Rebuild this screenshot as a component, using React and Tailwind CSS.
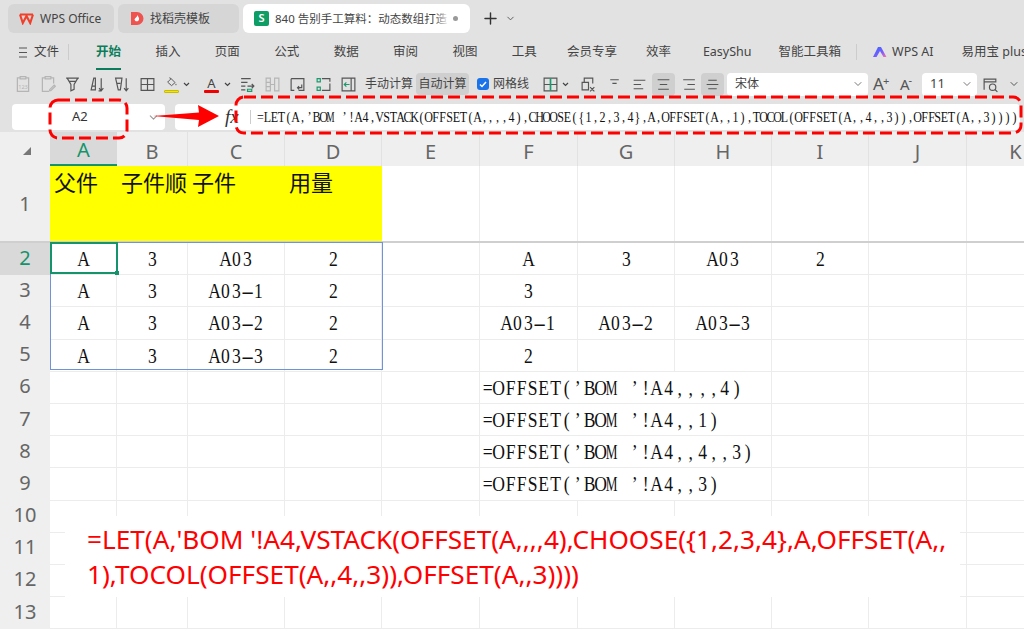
import React from 'react';
import { ChevronDown, Plus, X } from 'lucide-react';

const SANS = "font-[family-name:'Noto_Sans','Noto_Sans_CJK_SC',sans-serif]";
const SERIF = "font-[family-name:'Liberation_Serif','Noto_Sans_CJK_SC',serif]";

const FORMULA = "=LET(A,’BOM ’!A4,VSTACK(OFFSET(A,,,,4),CHOOSE({1,2,3,4},A,OFFSET(A,,1),TOCOL(OFFSET(A,,4,,3)),OFFSET(A,,3))))";

// SimSun's latin glyphs are narrow and fixed width, so every char gets its own cell
const squeeze = (ch) => {
  if (ch === '-') return 'scale-x-[1.8]';
  if (ch === 'M') return 'scale-x-[0.6]';
  return 'scale-x-[0.8]';
};

const Mono = ({ text, width }) => (
  <span className="whitespace-pre">
    {text.split('').map((ch, i) => (
      <span key={i} className={`inline-flex justify-center ${squeeze(ch)} ${width}`}>{ch}</span>
    ))}
  </span>
);

const Ico = ({ children, className = 'text-[#555]', size = 17 }) => (
  <svg width={size} height={size} viewBox="0 0 16 16" fill="none" stroke="currentColor" strokeWidth="1.1" className={`shrink-0 ${className}`}>
    {children}
  </svg>
);

const Slot = ({ children, className = 'w-[25px]' }) => (
  <div className={`flex items-center justify-center shrink-0 ${className}`}>{children}</div>
);

const Caret = () => (
  <svg width="7" height="5" viewBox="0 0 7 5" fill="none" stroke="#444" strokeWidth="1.2" className="shrink-0"><path d="M1 1l2.5 2.5L6 1" /></svg>
);

const Tabs = () => (
  <div className="flex items-start h-[36px] pt-[4px] pl-[8px] gap-[4px]">
    <div className="flex items-center w-[106px] h-[29px] rounded-md bg-[#d6d6d6] pl-[11px] gap-[6px] text-[12px] text-[#444]">
      <svg width="15" height="12" viewBox="0 0 15 12" fill="none" stroke="#f0402c" strokeWidth="2.1" className="shrink-0">
        <path d="M1 1.5l2.8 8.5 3.7-7 3.700 7L14 1.5M1 1.5h13" />
      </svg>
      WPS Office
    </div>
    <div className="flex items-center w-[121px] h-[29px] rounded-md bg-[#d6d6d6] pl-[12px] gap-[6px] text-[12px] text-[#444]">
      <svg width="14" height="15" viewBox="0 0 14 15" className="shrink-0">
        <path d="M1 1h6a6.5 6.5 0 010 13H1z" fill="#ef5350" />
        <path d="M7.5 4c.5 2 2 2.500 1.500 4.500S6 11 5 9.500 5 7.500 5.500 7 7 6 7.500 4z" fill="#fff" />
      </svg>
      找稻壳模板
    </div>
    <div className="flex items-center w-[227px] h-[29px] rounded-md bg-white pl-[11px] text-[11.5px] text-[#444]">
      <div className="flex items-center justify-center w-[15px] h-[15px] rounded-[2px] bg-[#0f9d66] text-white text-[11px] font-semibold mr-[6px] shrink-0">S</div>
      <div className="relative w-[174px] whitespace-nowrap">
        840 告别手工算料：动态数组打造
        <div className="absolute right-0 top-0 bottom-0 w-[14px] bg-gradient-to-r from-transparent to-white" />
      </div>
      <div className="w-[5px] h-[5px] rounded-full bg-[#999] ml-[4px]" />
    </div>
    <div className="flex items-center h-[29px] ml-[7px] gap-[5px] text-[#333]">
      <Plus size={19} strokeWidth={1.8} />
      <ChevronDown size={11} strokeWidth={2} className="text-[#555]" />
    </div>
  </div>
);

const RibbonTabs = () => (
  <div className="flex items-center h-[32px] pl-[19px] text-[12.5px] text-[#444] whitespace-nowrap">
    <svg width="8" height="11" viewBox="0 0 8 11" stroke="#555" strokeWidth="1.1" className="shrink-0"><path d="M0 1h8M0 5.500h8M0 10h8" /></svg>
    <span className="ml-[7px] shrink-0">文件</span>
    <div className="w-px h-[16px] bg-[#ccc] ml-[9px] shrink-0" />
    <div className="flex items-center gap-[34.4px] ml-[27px] shrink-0">
      <span className="relative font-bold text-[#0b7d5a]">
        开始
        <span className="absolute left-0 right-0 bottom-[-9px] h-[2px] bg-[#0b7d5a]" />
      </span>
      <span>插入</span>
      <span>页面</span>
      <span>公式</span>
      <span>数据</span>
      <span>审阅</span>
      <span>视图</span>
      <span>工具</span>
    </div>
    <span className="ml-[30px] shrink-0">会员专享</span>
    <span className="ml-[29px] shrink-0">效率</span>
    <span className="ml-[32px] shrink-0">EasyShu</span>
    <span className="ml-[27px] shrink-0">智能工具箱</span>
    <div className="w-px h-[16px] bg-[#ccc] ml-[15px] shrink-0" />
    <svg width="15" height="12" viewBox="0 0 15 12" className="ml-[16px] shrink-0">
      <defs>
        <linearGradient id="wpsai" x1="0" y1="0" x2="1" y2="1">
          <stop offset="0" stopColor="#2f6bff" />
          <stop offset="0.6" stopColor="#7a5cff" />
          <stop offset="1" stopColor="#ff6fa8" />
        </linearGradient>
      </defs>
      <path d="M0 11L5 1h3l5.500 10h-3L7 5l-3.500 6z" fill="url(#wpsai)" />
    </svg>
    <span className="ml-[4px] shrink-0">WPS AI</span>
    <span className="ml-[28px] shrink-0">易用宝 plus</span>
  </div>
);

const Lines = ({ d }) => (
  <Ico><path d={d} /></Ico>
);

const Toolbar = () => (
  <div className="flex items-center h-[32px] pl-[10px] text-[12px] text-[#444] whitespace-nowrap">
    <Slot>
      <Ico className="text-[#b5b5b5]" size={18}>
        <path d="M5 2.500H3v12h10v-12h-2M5.500 1.500h5v2h-5z" />
        <text x="8" y="12" fontSize="5" textAnchor="middle" fill="currentColor" stroke="none">123</text>
      </Ico>
    </Slot>
    <Slot>
      <Ico className="text-[#b5b5b5]" size={18}><path d="M5 2.500H3v12h6M11 2.500h2v5M5.500 1.500h5v2h-5zM9.500 13l4-4 1 1-4 4h-1z" /></Ico>
    </Slot>
    <Slot><Lines d="M2 2h12M3 2l3.500 6v6l3-1.500V8L13 2M5 5h6" /></Slot>
    <Slot><Lines d="M2 13L4.500 2h1.500v11zM3 9.500h3M9 14h3M11.500 2v12M9.500 11.500l2 2.500 2-2.500" /></Slot>
    <Slot><Lines d="M1.500 2h6L6 13H4zM3 7h3M11.500 2v12M9.500 11.500l2 2.500 2-2.500" /></Slot>
    <Slot><Lines d="M2 2.500h12v11H2zM8 2.500v11M2 8h12" /></Slot>
    <Slot className="w-[40px] gap-[4px] justify-start pl-[4px]">
      <div className="flex flex-col items-center">
        <Ico size={14}><path d="M3 7l4-4 4.500 4.500-4 3.500zM5 2l2 1M12.500 9v1.500" /></Ico>
        <div className="w-[15px] h-[3px] bg-[#f5e800] border border-[#c9bc00] rounded-[1px]" />
      </div>
      <Caret />
    </Slot>
    <Slot className="w-[35px] gap-[5px] justify-start pl-[4px]">
      <div className="flex flex-col items-center">
        <span className="text-[13px] leading-[14px] text-[#444]">A</span>
        <div className="w-[15px] h-[3px] bg-[#f00000] rounded-[1px]" />
      </div>
      <Caret />
    </Slot>
    <Slot>
      <Ico>
        <path d="M2 2.500h9M2 6h6M2 9.500h4M2 13h4M8 9.500h5.500M12 7.500l2 2-2 2" />
        <path d="M8 12.500h4v2H8z" stroke="#1c9a6e" />
      </Ico>
    </Slot>
    <Slot>
      <Ico className="text-[#b5b5b5]"><path d="M2 2h4v12H2zM10 2h4v12h-4zM2 6h4M2 10h4M6 8h4" /></Ico>
    </Slot>
    <Slot><Lines d="M2 2.500h12v11H9M2 2.500v11h3M12 8v3H8M9.500 9.500L8 11l1.500 1.500" /></Slot>
    <Slot className="w-[26px]">
      <Ico>
        <path d="M6.500 2.500H14v3M6.500 13.500H14V7" />
        <path d="M2 2.500h3v3H2zM2 10.500h3v3H2z" stroke="#1c9a6e" />
      </Ico>
    </Slot>
    <Slot className="w-[25px]">
      <Ico>
        <path d="M2 2h12v12H2zM10.500 2v12" />
        <path d="M9 8H4M6 6L4 8l2 2" stroke="#1c9a6e" />
      </Ico>
    </Slot>
    <span className="ml-[4px] w-[46px] shrink-0">手动计算</span>
    <div className="flex items-center justify-center ml-[5px] w-[53px] h-[22px] rounded bg-[#cfcfcf] shrink-0">自动计算</div>
    <div className="flex items-center justify-center ml-[8px] w-[12px] h-[12px] rounded-[3px] bg-[#1a73e8] shrink-0">
      <svg width="8" height="7" viewBox="0 0 8 7" fill="none" stroke="#fff" strokeWidth="1.500"><path d="M1 3.500l2 2 4-4.500" /></svg>
    </div>
    <span className="ml-[4px] w-[38px] shrink-0">网格线</span>
    <Slot className="w-[38px] gap-[3px] justify-end">
      <Ico>
        <path d="M2 2h12v12H2zM2 8h12" />
        <path d="M8 2v12" stroke="#1c9a6e" strokeWidth="1.6" />
      </Ico>
      <Caret />
    </Slot>
    <Slot className="w-[28px] ml-[5px]">
      <Ico><path d="M4 6V2h8v5M2 6h6v7H2zM9.500 10.500l4 4M13.500 10.500l-4 4" /></Ico>
    </Slot>
    <Slot className="w-[25px]"><Lines d="M4 3.500h8M6 7h4" /></Slot>
    <Slot className="w-[25px]"><Lines d="M2.500 4h11M2.500 8h7M2.500 12h9" /></Slot>
    <Slot className="w-[23px] h-[23px] rounded bg-[#cfcfcf]"><Lines d="M2.500 3.500h11M4.500 8h7M3 12.500h10" /></Slot>
    <Slot className="w-[26px]"><Lines d="M3 3.500h11M7 8h7M4 12.500h10" /></Slot>
    <Slot className="w-[23px] h-[23px] rounded bg-[#cfcfcf]"><Lines d="M4 4h8M2.500 8h11M4 12h8" /></Slot>
    <div className="flex items-center justify-between ml-[3px] w-[141px] h-[23px] rounded bg-white pl-[8px] pr-[4px] shrink-0">
      宋体
      <ChevronDown size={12} className="text-[#777]" />
    </div>
    <span className="ml-[5px] w-[20px] text-[17px] text-[#555] shrink-0">A<sup className="text-[11px] -ml-[1px]">+</sup></span>
    <span className="ml-[7px] w-[19px] text-[15px] text-[#555] shrink-0">A<sup className="text-[11px] -ml-[1px]">-</sup></span>
    <div className="flex items-center justify-between ml-[3px] w-[55px] h-[23px] rounded bg-white pl-[8px] pr-[4px] text-[13px] shrink-0">
      11
      <ChevronDown size={12} className="text-[#777]" />
    </div>
    <Slot className="w-[26px]">
      <Ico>
        <path d="M2 13V3h11v3M2 5.500h11" />
        <circle cx="10" cy="10.500" r="3" />
        <path d="M12.200 12.700L14.500 15" />
      </Ico>
    </Slot>
    <Slot className="w-[14px] ml-[4px]"><ChevronDown size={12} className="text-[#555]" /></Slot>
  </div>
);

const FormulaBar = () => (
  <div className="flex h-[32px] pt-[4px] pl-[12px] text-[#333]">
    <div className="relative flex items-center justify-between w-[153px] h-[26px] rounded bg-white pl-[60px] pr-[5px] text-[13px]">
      A2
      <ChevronDown size={13} className="text-[#999]" />
    </div>
    <div className={`flex items-center w-[845px] h-[26px] ml-[10px] rounded bg-white ${SERIF}`}>
      <X size={13} className="ml-[22px] text-[#777] shrink-0" />
      <span className="ml-[15px] w-[20px] text-[19px] italic text-[#333] shrink-0">fx</span>
      <div className="w-px h-[14px] bg-[#ccc] ml-[5px] mr-[6px] shrink-0" />
      <span className="text-[15px] text-[#111] whitespace-nowrap"><Mono text={FORMULA} width="w-[6.99px]" /></span>
    </div>
  </div>
);

const COLS = ['A', 'B', 'C', 'D', 'E', 'F', 'G', 'H', 'I', 'J', 'K'];

const ROWS = [
  ['A', '3', 'A03', '2', '', 'A', '3', 'A03', '2', '', ''],
  ['A', '3', 'A03-1', '2', '', '3', '', '', '', '', ''],
  ['A', '3', 'A03-2', '2', '', 'A03-1', 'A03-2', 'A03-3', '', '', ''],
  ['A', '3', 'A03-3', '2', '', '2', '', '', '', '', ''],
];

const OFFSETS = [
  "=OFFSET(’BOM ’!A4,,,,4)",
  "=OFFSET(’BOM ’!A4,,1)",
  "=OFFSET(’BOM ’!A4,,4,,3)",
  "=OFFSET(’BOM ’!A4,,3)",
];

const rowHead = 'flex items-center justify-center pb-[3px] bg-[#efefef] text-[20px] text-[#666]';
const cellBase = `flex items-center justify-center h-[32.2px] border-r border-b border-[#ececec] text-[22px] text-[#111] ${SERIF}`;

const Blank = ({ n }) => Array.from({ length: n }, (_, i) => (
  <div key={i} className="h-[32.2px] border-r border-b border-[#ececec]" />
));

const Sheet = () => (
  <div className="grid grid-cols-[50px_67px_71px_97px_97px_98px_98px_97px_97px_97px_98px_98px] bg-white">
    {/* column header */}
    <div className="flex items-center justify-center h-[34px] bg-[#efefef]">
      <div className="w-0 h-0 border-l-[8px] border-b-[8px] border-l-transparent border-b-[#777] ml-[3px] mt-[3px]" />
    </div>
    {COLS.map((c, i) => (
      <div
        key={c}
        className={i === 0
          ? 'flex items-center justify-center pt-[4px] h-[34px] bg-[#d9d9d9] border-b-2 border-[#15936a] text-[20px] text-[#15936a]'
          : 'flex items-center justify-center pt-[5px] h-[34px] bg-[#efefef] border-r border-[#e2e2e2] text-[20px] text-[#666]'}
      >
        {c}
      </div>
    ))}

    {/* row 1 */}
    <div className={`${rowHead} !pb-0 h-[75px]`}>1</div>
    {['父件', '子件顺', '子件', '用量'].map((t) => (
      <div key={t} className="h-[75px] bg-[#ffff00] pl-[4px] text-[22px] leading-[30px] text-[#111] whitespace-nowrap overflow-hidden font-[family-name:'Noto_Sans_CJK_SC',sans-serif]">{t}</div>
    ))}
    {COLS.slice(4).map((c) => <div key={c} className="h-[75px] border-r border-[#ececec]" />)}

    {/* frozen pane line */}
    <div className="col-span-12 h-[2px] bg-[#cfcfcf]" />

    {ROWS.map((row, r) => (
      <React.Fragment key={r}>
        <div className={r === 0 ? `${rowHead} h-[32.2px] !bg-[#d9d9d9] !text-[#15936a]` : `${rowHead} h-[32.2px]`}>{r + 2}</div>
        {row.map((v, c) => (
          <div key={c} className={cellBase}>{v && <Mono text={v} width="w-[11px]" />}</div>
        ))}
      </React.Fragment>
    ))}

    {OFFSETS.map((f, r) => (
      <React.Fragment key={r}>
        <div className={`${rowHead} h-[32.2px]`}>{r + 6}</div>
        <Blank n={5} />
        <div className={`${cellBase} col-span-3 !justify-start pl-[2px] whitespace-nowrap`}><Mono text={f} width="w-[11.3px]" /></div>
        <Blank n={3} />
      </React.Fragment>
    ))}

    {[10, 11, 12, 13].map((n) => (
      <React.Fragment key={n}>
        <div className={`${rowHead} h-[32.2px]`}>{n}</div>
        <Blank n={11} />
      </React.Fragment>
    ))}
  </div>
);

// hand drawn red notes that lie over the formula bar
const Annotations = () => (
  <svg className="absolute left-0 top-0 pointer-events-none" width="1024" height="140" fill="none">
    <rect x="50" y="100" width="77" height="38" rx="8" stroke="#ff0000" strokeWidth="3" strokeDasharray="12 5" />
    <rect x="236" y="97" width="785" height="36" rx="8" stroke="#ff0000" strokeWidth="3" strokeDasharray="12 5" />
    <path d="M153 116L199 112.500 198 105 219 116 198 127 199 120z" fill="#ff0000" />
  </svg>
);

export default function App() {
  return (
    <div className={`relative w-[1024px] h-[629px] overflow-hidden bg-[#e2e2e2] ${SANS}`}>
      <Tabs />
      <RibbonTabs />
      <Toolbar />
      <FormulaBar />
      <Sheet />
      <Annotations />

      {/* selection of the table and the active cell */}
      <div className="absolute left-[50px] top-[242px] w-[333px] h-[128px] border border-[#6f93d6]" />
      <div className="absolute left-[50px] top-[242px] w-[68px] h-[32px] border-2 border-[#15936a]">
        <div className="absolute right-[-3px] bottom-[-3px] w-[4px] h-[4px] bg-[#15936a]" />
      </div>

      {/* pasted note with the formula */}
      <div className="absolute left-[65px] top-[516px] w-[895px] h-[81px] bg-white pl-[22px] pt-[6px] text-[26.2px] leading-[35px] text-[#ff0000] whitespace-nowrap">
        <div>=LET(A,'BOM '!A4,VSTACK(OFFSET(A,,,,4),CHOOSE({'{'}1,2,3,4{'}'},A,OFFSET(A,,</div>
        <div>1),TOCOL(OFFSET(A,,4,,3)),OFFSET(A,,3))))</div>
      </div>
    </div>
  );
}
